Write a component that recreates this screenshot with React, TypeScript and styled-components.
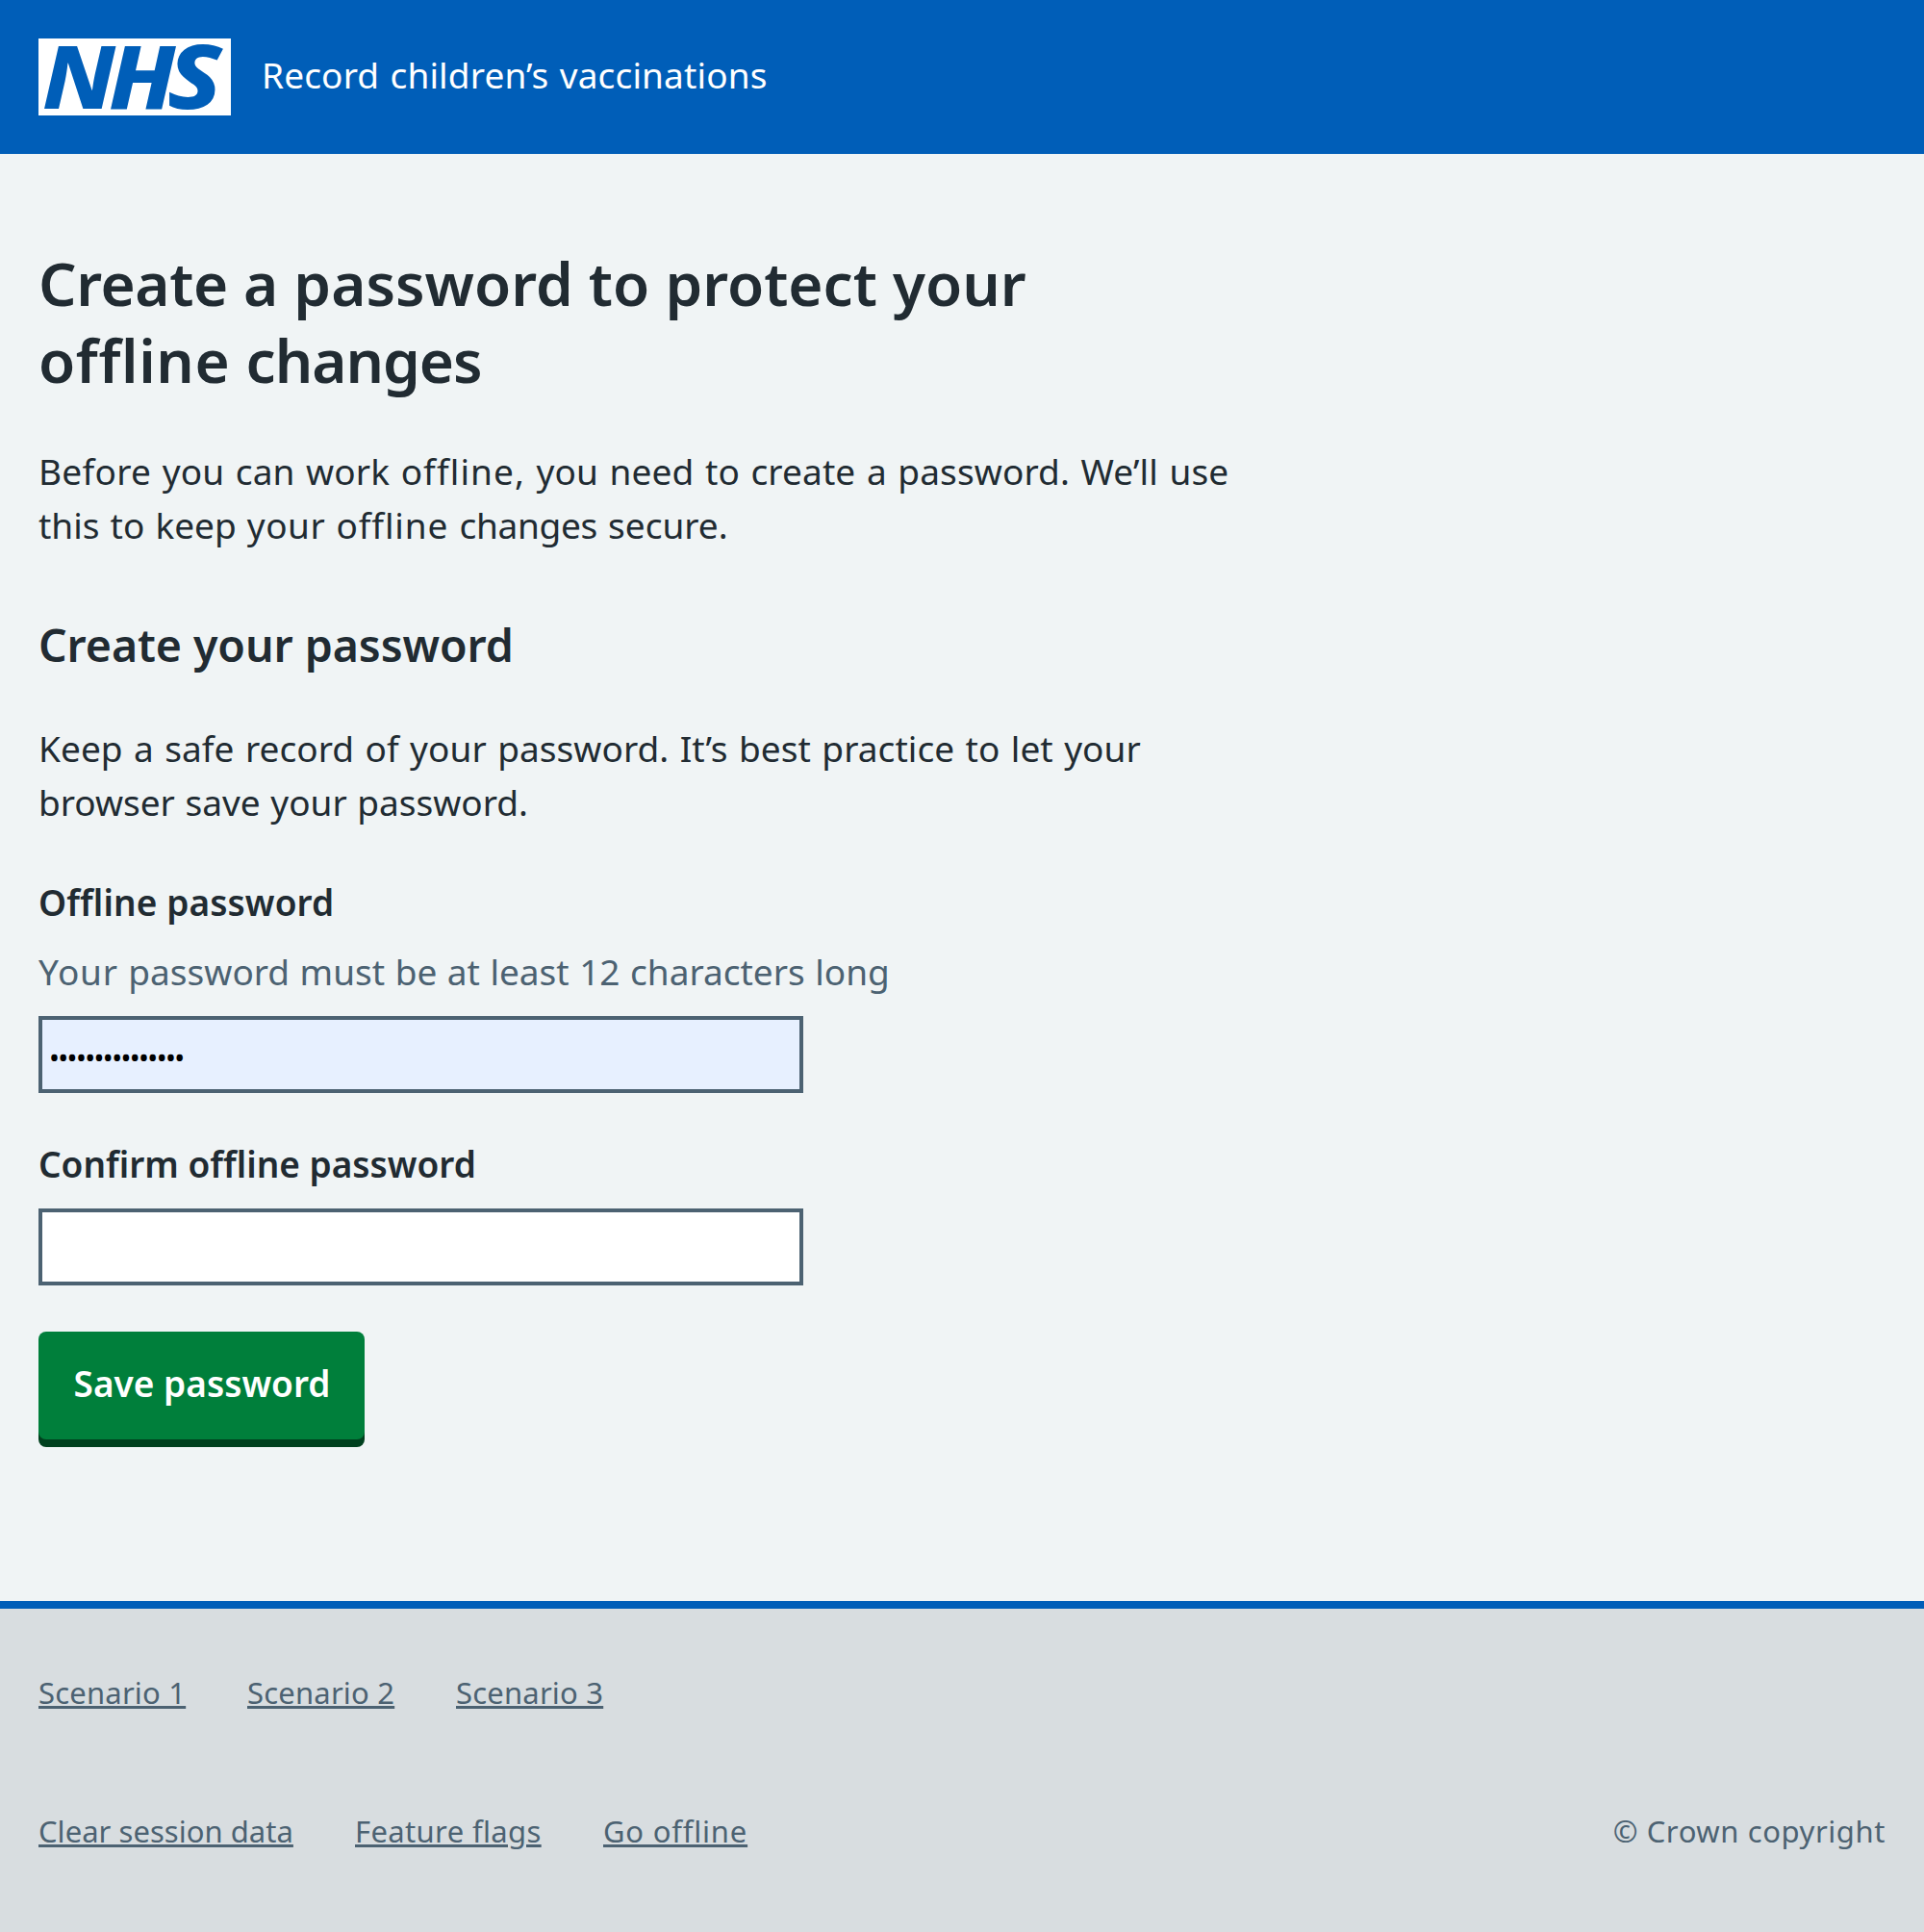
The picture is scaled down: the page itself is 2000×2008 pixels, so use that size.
import React from "react";
import styled, { createGlobalStyle } from "styled-components";

const blue = "#005eb8";
const ink = "#212b32";
const slate = "#4c6272";

const GlobalStyle = createGlobalStyle`
  *, *::before, *::after { box-sizing: border-box; }
  html, body { margin: 0; background: #d8dde0; }
  body {
    font-family: "Noto Sans", "Open Sans", sans-serif;
    font-variant-ligatures: none;
    color: ${ink};
  }
`;

const Page = styled.div`
  display: flex;
  flex-direction: column;
  min-height: 2008px;
  background: #f0f4f5;
`;

const Header = styled.header`
  display: flex;
  align-items: center;
  gap: 32px;
  height: 160px;
  padding: 0 40px;
  background: ${blue};
`;

const Logo = styled.svg`
  display: block;
  width: 200px;
  height: 80px;
  overflow: visible;
  background: #fff;
`;

const LogoLetters = styled.text<{ $size: number }>`
  font-family: "Noto Sans", sans-serif;
  font-size: ${(p) => p.$size}px;
  font-weight: 800;
  font-style: italic;
  fill: ${blue};
`;

const ServiceName = styled.span`
  padding-bottom: 5px;
  font-size: 37px;
  line-height: 56px;
  color: #fff;
`;

const Main = styled.main`
  display: flex;
  flex-direction: column;
  align-items: flex-start;
  height: 1504px;
  padding: 94px 40px 0;
`;

const Line = styled.span<{ $track?: number; $word?: number }>`
  display: block;
  width: max-content;
  white-space: nowrap;
  letter-spacing: ${(p) => p.$track ?? 0}px;
  word-spacing: ${(p) => p.$word ?? 0}px;
`;

const Word = styled.span<{ $track: number }>`
  letter-spacing: ${(p) => p.$track}px;
`;

const Title = styled.h1`
  margin: 0 0 48px;
  font-size: 62px;
  font-weight: 600;
  line-height: 80px;
`;

const Subtitle = styled.h2`
  margin: 0 0 50px;
  font-size: 46.5px;
  font-weight: 600;
  line-height: 60px;
`;

const Paragraph = styled.p<{ $after: number }>`
  margin: 0 0 ${(p) => p.$after}px;
  font-size: 37px;
  line-height: 56px;
`;

const Field = styled.div<{ $after: number }>`
  display: flex;
  flex-direction: column;
  margin-bottom: ${(p) => p.$after}px;
`;

const Label = styled.label<{ $after: number }>`
  margin-bottom: ${(p) => p.$after}px;
  font-size: 37px;
  font-weight: 600;
  line-height: 56px;
`;

const Hint = styled.div`
  margin-bottom: 18px;
  font-size: 37px;
  line-height: 56px;
  color: ${slate};
`;

const Input = styled.input<{ $filled?: boolean }>`
  width: 795px;
  height: 80px;
  margin: 0;
  padding: 5px 8px 0 7px;
  border: 4px solid ${slate};
  border-radius: 0;
  outline: none;
  background: ${(p) => (p.$filled ? "#e7f0ff" : "#fff")};
  color: #000;
  font-family: "Noto Sans", sans-serif;
  font-size: 29px;
  letter-spacing: -1.6px;
`;

const SaveButton = styled.button`
  display: flex;
  align-items: center;
  justify-content: center;
  width: 339px;
  height: 112px;
  padding: 0 0 5px 1px;
  border: 0;
  border-radius: 8px;
  background: #007f3b;
  box-shadow: 0 8px 0 #00401e;
  color: #fff;
  font-family: inherit;
  font-size: 37px;
  font-weight: 600;
  line-height: 56px;
`;

const Footer = styled.footer`
  display: flex;
  flex-direction: column;
  flex: 1;
  gap: 96px;
  padding: 63px 40px 0;
  border-top: 8px solid ${blue};
  background: #d8dde0;
  color: ${slate};
  font-size: 31px;
  line-height: 48px;
`;

const FooterRow = styled.div`
  display: flex;
  justify-content: space-between;
`;

const Links = styled.nav`
  display: flex;
  gap: 64px;
`;

const Link = styled.a<{ $width: number; $track: number }>`
  width: ${(p) => p.$width}px;
  white-space: nowrap;
  letter-spacing: ${(p) => p.$track}px;
  color: ${slate};
  text-decoration: underline;
  text-decoration-thickness: 3px;
  text-underline-offset: 2px;
`;

const scenarios = ["Scenario 1", "Scenario 2", "Scenario 3"];

const tools = [
  { label: "Clear session data", width: 265, track: 0.03 },
  { label: "Feature flags", width: 194, track: 0.36 },
  { label: "Go offline", width: 150, track: 0.8 },
];

export default function App() {
  return (
    <>
      <GlobalStyle />
      <Page>
        <Header>
          <Logo viewBox="0 0 200 80" role="img" aria-label="NHS">
            <LogoLetters $size={91} transform="scale(1.08 1)" x="3.7 67.6" y="72.5">
              NH
            </LogoLetters>
            <LogoLetters $size={92.5} transform="scale(1.14 1)" x="117.6" y="72.8">
              S
            </LogoLetters>
          </Logo>
          <ServiceName>
            <Line $track={0.15} $word={1.5}>Record children’s vaccinations</Line>
          </ServiceName>
        </Header>
        <Main>
          <Title>
            <Line>
              <Word $track={-0.4}>Create</Word> a password to protect your
            </Line>
            <Line>
              <Word $track={0.6}>offline</Word> <Word $track={-1}>changes</Word>
            </Line>
          </Title>
          <Paragraph $after={66}>
            <Line $track={0.12} $word={1.8}>
              <Word $track={0.3}>Before</Word> you can work <Word $track={1.1}>offline,</Word> you need to create a password. We’ll use
            </Line>
            <Line $word={1.5}>
              this to keep <Word $track={0.5}>your</Word> <Word $track={0.9}>offline</Word> <Word $track={-0.3}>changes</Word> secure.
            </Line>
          </Paragraph>
          <Subtitle>
            <Line $track={-0.08}>Create your password</Line>
          </Subtitle>
          <Paragraph $after={48}>
            <Line $track={0.06} $word={1.7}>
              Keep a safe record of your password. It’s best practice to let your
            </Line>
            <Line $word={1}>browser save your password.</Line>
          </Paragraph>
          <Field $after={46}>
            <Label $after={16} htmlFor="password">
              <Line $track={0.1}>Offline password</Line>
            </Label>
            <Hint>
              <Line $word={0.9}>
                <Word $track={0.8}>Your</Word> password must be at least 12 characters long
              </Line>
            </Hint>
            <Input id="password" type="password" $filled defaultValue="offlinepassword" />
          </Field>
          <Field $after={48}>
            <Label $after={18} htmlFor="confirm">
              <Line>Confirm offline password</Line>
            </Label>
            <Input id="confirm" type="password" />
          </Field>
          <SaveButton type="button">
            <Line>Save password</Line>
          </SaveButton>
        </Main>
        <Footer>
          <FooterRow>
            <Links>
              {scenarios.map((label) => (
                <Link key={label} $width={153} $track={0.19}>{label}</Link>
              ))}
            </Links>
          </FooterRow>
          <FooterRow>
            <Links>
              {tools.map((t) => (
                <Link key={t.label} $width={t.width} $track={t.track}>{t.label}</Link>
              ))}
            </Links>
            <Line $track={0.58}>© Crown copyright</Line>
          </FooterRow>
        </Footer>
      </Page>
    </>
  );
}
